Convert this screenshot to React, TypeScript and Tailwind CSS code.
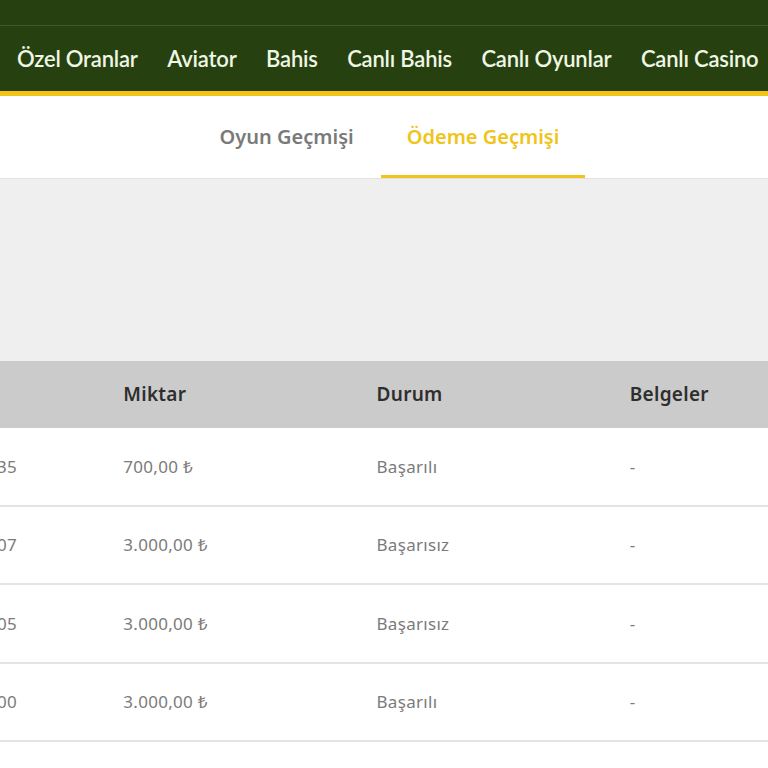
import React from "react";

const navItems = ["Özel Oranlar", "Aviator", "Bahis", "Canlı Bahis", "Canlı Oyunlar", "Canlı Casino"];

const rows = [
  { date: "03.10.2024 - 14:35", amount: "700,00 ₺", status: "Başarılı" },
  { date: "03.10.2024 - 14:07", amount: "3.000,00 ₺", status: "Başarısız" },
  { date: "03.10.2024 - 14:05", amount: "3.000,00 ₺", status: "Başarısız" },
  { date: "03.10.2024 - 14:00", amount: "3.000,00 ₺", status: "Başarılı" },
];

const App = () => {
  return (
    <div className="w-[768px] h-[768px] overflow-hidden bg-white" style={{ fontFamily: "'Noto Sans', 'Open Sans', sans-serif" }}>
      <header className="bg-[#274010]">
        <div className="h-[26px] border-b border-[#3e5a2a]" />
        <nav className="h-[65px] flex items-center pl-[17px] gap-[29.5px] whitespace-nowrap border-b-[5px] border-[#f0c419] box-content">
          {navItems.map((item) => (
            <span
              key={item}
              className="text-[22px] font-semibold text-[#eef6e4] tracking-[-0.2px]"
              style={{ fontFamily: "Lato, sans-serif" }}
            >
              {item}
            </span>
          ))}
        </nav>
      </header>

      <div className="h-[83px] flex justify-center border-b border-[#e2e2e2] pl-[10px]">
        <div className="flex items-center px-[27px] text-[20px] font-semibold text-[#7a7a7a]">Oyun Geçmişi</div>
        <div className="flex items-center px-[26px] text-[20px] font-semibold text-[#f0c419] border-b-[3px] border-[#f0c419] pt-[3px]">
          Ödeme Geçmişi
        </div>
      </div>

      <div className="h-[182px] bg-[#efefef]" />

      <div className="ml-[-130px] w-[1013px]">
        <div className="grid grid-cols-4 h-[67px] bg-[#cbcbcb] items-center text-[19px] font-semibold text-[#2e2e2e] tracking-[0.3px]">
          <div>Tarih</div>
          <div>Miktar</div>
          <div>Durum</div>
          <div>Belgeler</div>
        </div>
        {rows.map((r, i) => (
          <div
            key={i}
            className="grid grid-cols-4 h-[78.5px] items-center border-b-2 border-[#e4e4e4] text-[17px] text-[#7b7b7b] tracking-[0.3px]"
          >
            <div className="whitespace-nowrap -ml-[3px]">{r.date}</div>
            <div>{r.amount}</div>
            <div>{r.status}</div>
            <div>-</div>
          </div>
        ))}
      </div>
    </div>
  );
};

export default App;
